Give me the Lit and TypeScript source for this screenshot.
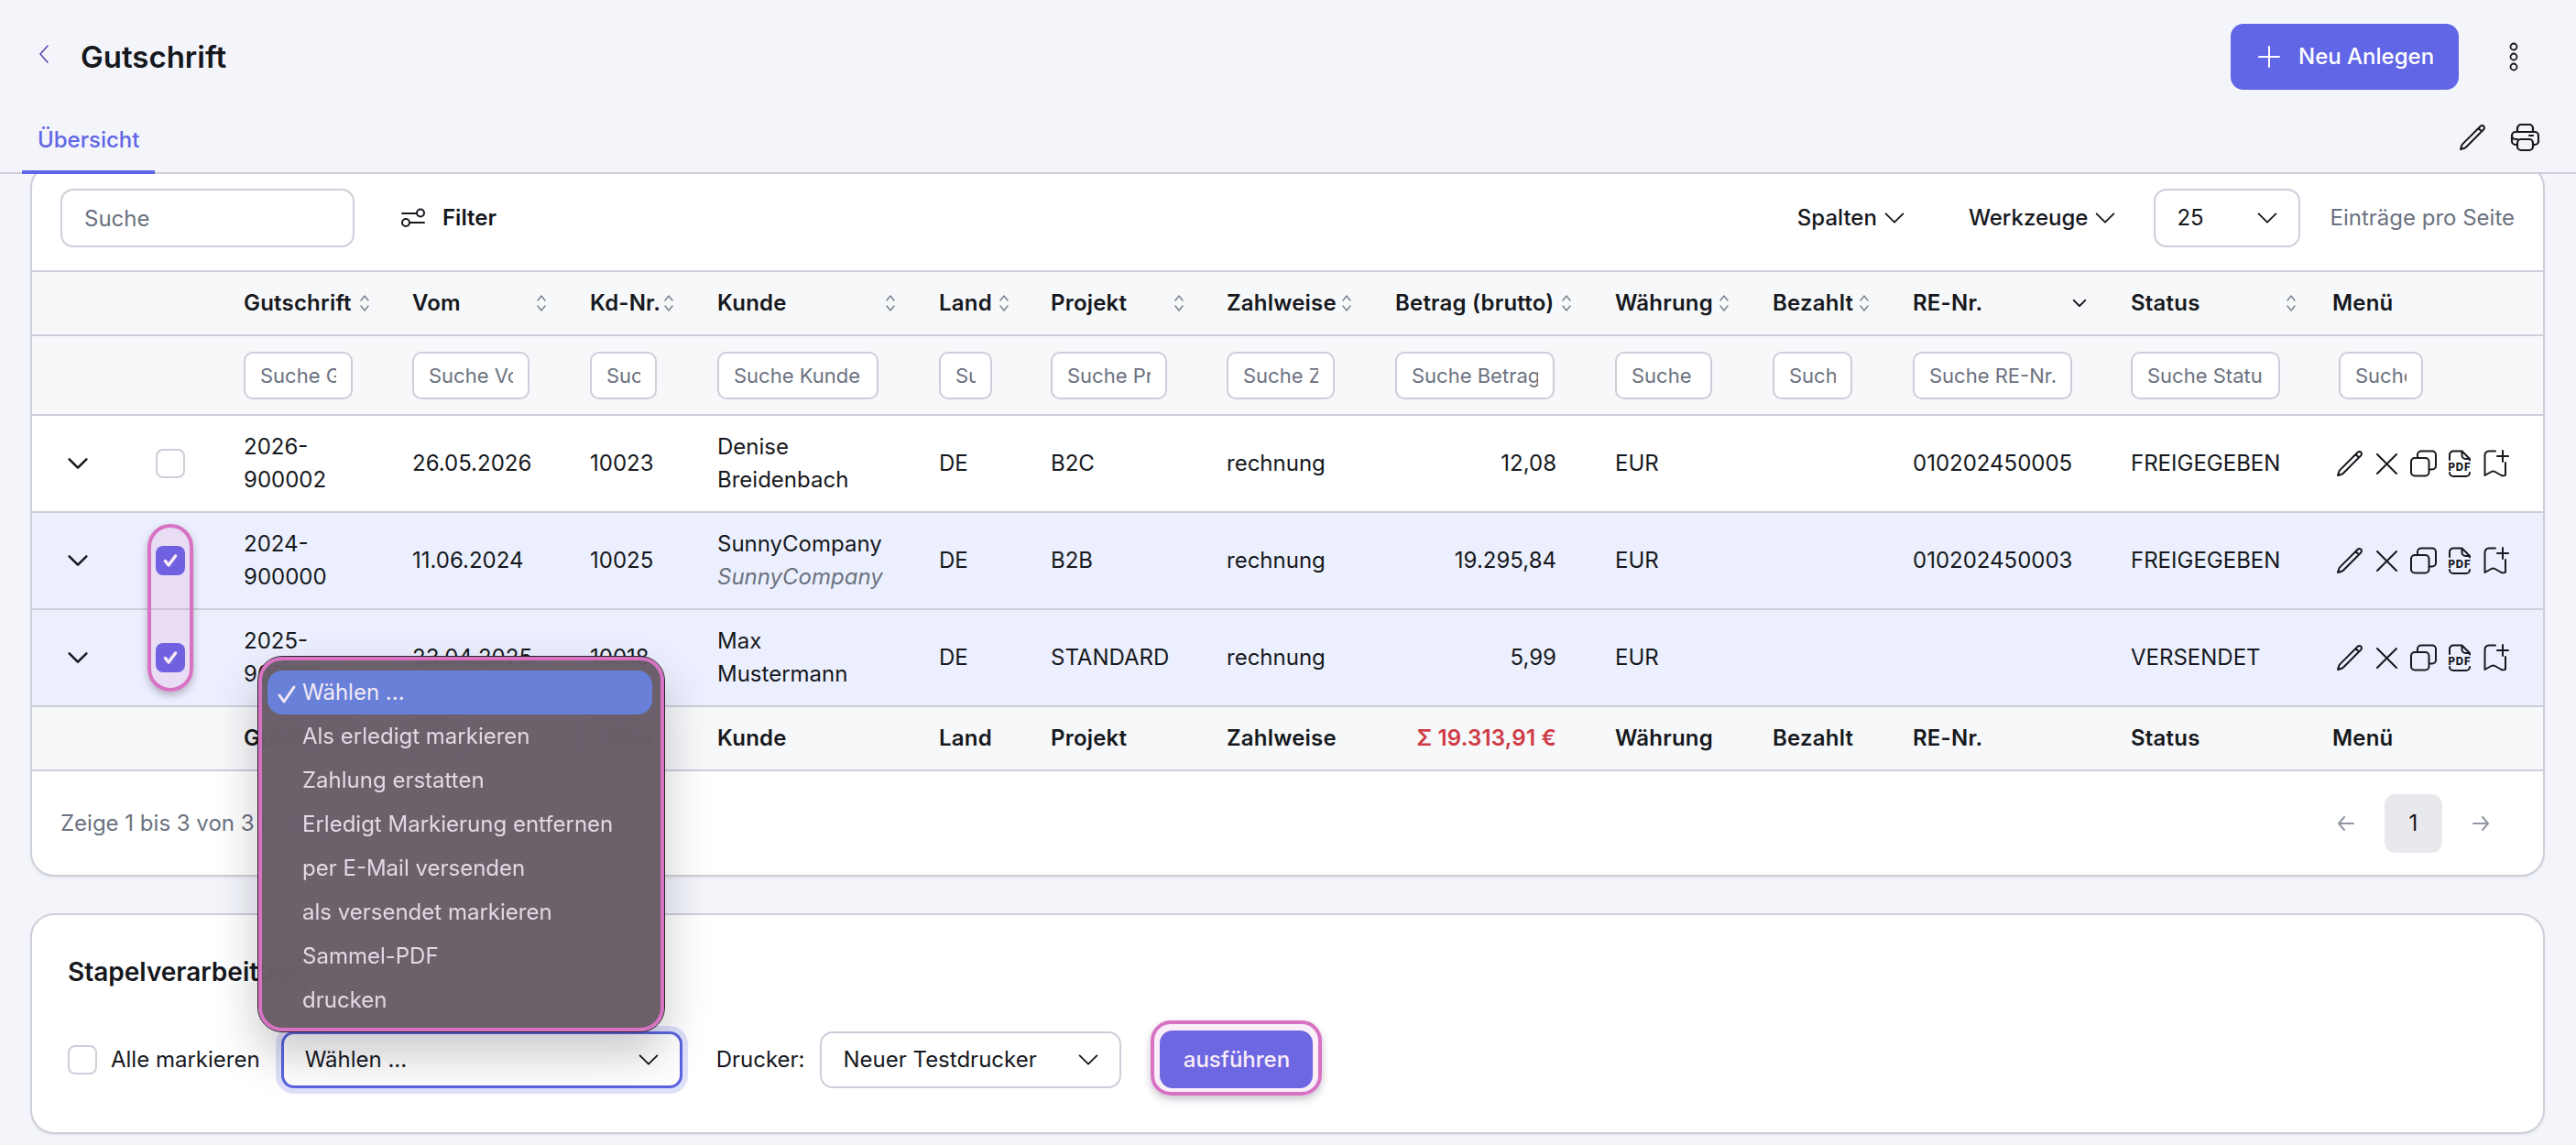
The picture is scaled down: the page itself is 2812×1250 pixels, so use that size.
import { LitElement, html, css, svg } from 'lit';
import { customElement } from 'lit/decorators.js';

type Col = { label: string; x: number; input: number; sort: 'both' | 'down' | 'none'; head: number; inputLeft?: number };

// x is only used to derive column widths from the neighbouring column
const COLS: Col[] = [
  { label: 'Gutschrift', x: 266, input: 119, sort: 'both', head: 139 },
  { label: 'Vom', x: 450, input: 128, sort: 'both', head: 148 },
  { label: 'Kd-Nr.', x: 644, input: 73, sort: 'both', head: 93 },
  { label: 'Kunde', x: 783, input: 176, sort: 'both', head: 196 },
  { label: 'Land', x: 1025, input: 58, sort: 'both', head: 78 },
  { label: 'Projekt', x: 1147, input: 127, sort: 'both', head: 147 },
  { label: 'Zahlweise', x: 1339, input: 118, sort: 'both', head: 138 },
  { label: 'Betrag (brutto)', x: 1523, input: 174, sort: 'both', head: 194 },
  { label: 'Währung', x: 1763, input: 106, sort: 'both', head: 126 },
  { label: 'Bezahlt', x: 1935, input: 87, sort: 'both', head: 107 },
  { label: 'RE-Nr.', x: 2088, input: 174, sort: 'down', head: 192 },
  { label: 'Status', x: 2326, input: 163, sort: 'both', head: 182 },
  { label: 'Menü', x: 2546, input: 92, sort: 'none', head: 90, inputLeft: 7 },
];
const TABLE_END = 2776;

const ROWS = [
  { no: '2026-900002', date: '26.05.2026', kd: '10023', name: ['Denise', 'Breidenbach'], alt: false, land: 'DE', proj: 'B2C', amount: '12,08', re: '010202450005', status: 'FREIGEGEBEN', sel: false },
  { no: '2024-900000', date: '11.06.2024', kd: '10025', name: ['SunnyCompany', 'SunnyCompany'], alt: true, land: 'DE', proj: 'B2B', amount: '19.295,84', re: '010202450003', status: 'FREIGEGEBEN', sel: true },
  { no: '2025-900001', date: '23.04.2025', kd: '10018', name: ['Max', 'Mustermann'], alt: false, land: 'DE', proj: 'STANDARD', amount: '5,99', re: '', status: 'VERSENDET', sel: true },
];

const MENU = ['Wählen ...', 'Als erledigt markieren', 'Zahlung erstatten', 'Erledigt Markierung entfernen', 'per E-Mail versenden', 'als versendet markieren', 'Sammel-PDF', 'drucken'];

const chevron = (cls = 'chev') => html`<svg class=${cls} viewBox="0 0 24 24" fill="none" stroke="currentColor" stroke-width="1.5" stroke-linecap="round" stroke-linejoin="round"><path d="m19.5 8.25-7.5 7.5-7.5-7.5"/></svg>`;
const sortIcon = html`<svg class="sort" viewBox="0 0 14 20" fill="none" stroke="currentColor" stroke-width="1.5" stroke-linecap="round" stroke-linejoin="round"><path d="M3 7l4-5 4 5M3 13l4 5 4-5"/></svg>`;
const checkMark = html`<svg viewBox="0 0 32 32" fill="none" stroke="#fff" stroke-width="3.500" stroke-linecap="round" stroke-linejoin="round"><path d="M10.500 16.500l3.500 4.500 7.500-10"/></svg>`;
const pencil = svg`<path d="m16.862 4.487 1.687-1.688a1.875 1.875 0 1 1 2.652 2.652L6.832 19.82a4.5 4.5 0 0 1-1.897 1.13l-2.685.8.8-2.685a4.5 4.5 0 0 1 1.13-1.897L16.863 4.487Zm0 0L19.5 7.125"/>`;

const rowIcons = html`
  <div class="icons">
    <svg viewBox="0 0 24 24" fill="none" stroke="currentColor" stroke-width="1.5" stroke-linecap="round" stroke-linejoin="round">${pencil}</svg>
    <svg viewBox="0 0 32 32" fill="none" stroke="currentColor" stroke-width="2" stroke-linecap="round"><path d="M6 6l21 21M27 6L6 27"/></svg>
    <svg viewBox="0 0 32 32" fill="none" stroke="currentColor" stroke-width="2" stroke-linecap="round"><rect x="3" y="10" width="19.5" height="19.5" rx="4"/><path d="M10 9V6.500a4 4 0 0 1 4-4h12a4 4 0 0 1 4 4v12a4 4 0 0 1-4 4h-3"/></svg>
    <svg viewBox="0 0 32 32" fill="none" stroke="currentColor" stroke-width="2" stroke-linecap="round" stroke-linejoin="round"><path d="M5 12V6.500a4 4 0 0 1 4-4h9.500l8.500 8.500v1.500M18.500 3v4a4 4 0 0 0 4 4H27M5 26a4 4 0 0 0 4 4h14a4 4 0 0 0 4-4"/><text x="16" y="23.500" text-anchor="middle" fill="currentColor" stroke="none" font-family="Inter, sans-serif" font-size="11.500" font-weight="800" letter-spacing=".8">PDF</text></svg>
    <svg viewBox="0 0 32 32" fill="none" stroke="currentColor" stroke-width="2" stroke-linecap="round" stroke-linejoin="round"><path d="M15 2.500H8a4.500 4.500 0 0 0-4.500 4.500v22l7-4a4 4 0 0 1 4 0l7 4c1 .5 3.500.500 4.500-.5V15"/><path d="M23 2v12M17 8h12"/></svg>
  </div>`;

@customElement('app-root')
export class AppRoot extends LitElement {
  static styles = css`
    :host {
      display: block;
      position: relative;
      width: 2812px;
      height: 1250px;
      overflow: hidden;
      background: #f3f5fb;
      color: #16181d;
      font: 400 24px/36px Inter, 'Liberation Sans', sans-serif;
    }
    * { box-sizing: border-box; }
    svg { display: block; flex: none; }
    input { font: inherit; color: inherit; }
    input::placeholder { color: #6b7280; opacity: 1; }

    .head {
      position: relative;
      z-index: 1;
      height: 190px;
      padding-top: 26px;
      background: #f3f5fb;
      border-bottom: 2px solid #cdced9;
      display: flex;
      flex-direction: column;
    }
    .top { display: flex; align-items: center; height: 72px; padding: 0 54px 0 36px; }
    .back { width: 24px; height: 24px; color: #5b3fb0; margin-top: -6px; }
    .title { font-size: 33px; font-weight: 600; margin-left: 28px; }
    .new {
      margin-left: auto;
      width: 249px;
      height: 72px;
      display: flex;
      align-items: center;
      gap: 18px;
      padding-left: 28px;
      border-radius: 14px;
      background: #6066e6;
      color: #fff;
      font-weight: 500;
    }
    .new svg { width: 28px; height: 28px; }
    .dots { width: 28px; height: 32px; margin-left: 46px; }
    .tabs { flex: 1; display: flex; align-items: center; padding: 0 40px 0 24px; margin-top: 22px; }
    .tab {
      align-self: stretch;
      display: flex;
      align-items: center;
      padding: 0 17px;
      margin-bottom: -2px;
      border-bottom: 4px solid #6066e6;
      color: #6066e6;
      font-weight: 500;
    }
    .tabs .tools { margin-left: auto; display: flex; gap: 25px; margin-top: -8px; }
    .tools svg { width: 32px; height: 32px; }

    .card {
      margin: 0 34px 0 33px;
      background: #fff;
      border: 2px solid #cdced9;
      border-radius: 26px;
      box-shadow: 0 2px 3px rgba(30, 30, 60, 0.05);
    }
    .list { margin-top: -11px; overflow: hidden; }
    .toolbar { display: flex; align-items: center; height: 114px; padding: 0 31px; }
    .search, .select {
      height: 64px;
      border: 2px solid #cdced9;
      border-radius: 14px;
      background: #fff;
      display: flex;
      align-items: center;
    }
    .search { width: 321px; padding: 0 24px; outline: none; }
    .filter { display: flex; align-items: center; gap: 18px; margin-left: 50px; font-weight: 600; }
    .filter svg { width: 28px; height: 22px; }
    .menu-btn { display: flex; align-items: center; gap: 4px; font-weight: 500; }
    .chev { width: 30px; height: 30px; }
    .spalten { margin-left: auto; }
    .werkzeuge { margin-left: 66px; }
    .select { justify-content: space-between; padding: 0 19px 0 23px; }
    .size { width: 160px; margin-left: 38px; }
    .hint { margin-left: 32px; color: #6b7280; }

    table { width: 100%; border-collapse: separate; border-spacing: 0; table-layout: fixed; }
    th, td { padding: 0; border-bottom: 2px solid #cdced9; white-space: nowrap; font-weight: 400; text-align: left; }
    thead tr:first-child th { border-top: 2px solid #cdced9; height: 72px; background: #f7f8fa; font-weight: 600; letter-spacing: 0.2px; }
    .filters td { height: 87px; background: #f7f8fa; }
    .filters input {
      display: block;
      height: 52px;
      padding: 0 16px;
      font-size: 22px;
      border: 2px solid #cdced9;
      border-radius: 10px;
      background: #fff;
      outline: none;
    }
    .hcell { display: flex; align-items: center; justify-content: space-between; }
    .sort { width: 14px; height: 20px; color: #7b8290; }
    .down { width: 20px; height: 20px; stroke-width: 2.5; }
    tbody td { height: 106px; }
    tr.sel td { background: #ecf0fe; }
    td.wrap { white-space: normal; padding-right: 40px; }
    td.no { padding-right: 50px; }
    td.right, tfoot .right { text-align: right; padding-right: 64px; }
    .sub { color: #6b7280; font-style: italic; }
    .expand { width: 30px; height: 30px; margin-left: 35px; stroke-width: 2; }
    .box {
      width: 32px;
      height: 32px;
      border: 2px solid #cdced9;
      border-radius: 8px;
      background: #fff;
    }
    td .box { margin-left: 35px; }
    .box.on { background: #5f5fe6; border: 0; }
    tfoot td { height: 70px; background: #f7f8fa; font-weight: 600; letter-spacing: 0.2px; }
    tfoot .sum { color: #d03a45; }
    .icons { display: flex; gap: 8px; margin-left: 3px; }
    .icons svg { width: 32px; height: 32px; }

    .pager { display: flex; align-items: center; justify-content: space-between; height: 113px; padding: 0 57px 0 31px; color: #6b7280; }
    .pages { display: flex; align-items: center; gap: 31px; }
    .pages svg { width: 22px; height: 22px; color: #9297a3; }
    .page { width: 63px; height: 64px; border-radius: 12px; background: #e8e9ed; color: #16181d; display: flex; align-items: center; justify-content: center; }

    .batch { margin-top: 40px; height: 241px; padding: 44px 39px 0; }
    .batch h2 { margin: 0; font-size: 28px; line-height: 36px; font-weight: 600; }
    .actions { display: flex; align-items: center; margin-top: 46px; }
    .actions .label { margin-left: 15px; }
    .select.bulk {
      width: 438px;
      height: 62px;
      margin-left: 23px;
      border: 3px solid #5b63e0;
      box-shadow: 0 0 0 6px #dfe1fb;
    }
    .printer-label { margin-left: 37px; }
    .select.printer { width: 329px; height: 62px; margin-left: 17px; }
    .run-wrap { position: relative; margin-left: 42px; }
    .run {
      width: 167px;
      height: 63px;
      border-radius: 14px;
      background: #6066e6;
      color: #fff;
      font-weight: 500;
      display: flex;
      align-items: center;
      justify-content: center;
    }

    /* annotation marks lying over the page */
    .mark {
      position: absolute;
      z-index: 2;
      border: 4px solid #d873c4;
      background: rgba(216, 115, 196, 0.15);
      box-shadow: 0 4px 8px rgba(40, 20, 50, 0.3);
    }
    .capsule { left: 161px; top: 572px; width: 50px; height: 183px; border-radius: 26px; }
    .run-wrap::after {
      content: '';
      position: absolute;
      inset: -11px -10px -8px -10px;
      border: 4px solid #d873c4;
      border-radius: 22px;
      background: rgba(216, 115, 196, 0.12);
      box-shadow: 0 4px 8px rgba(40, 20, 50, 0.25);
    }

    .popup {
      position: absolute;
      z-index: 3;
      left: 282px;
      top: 717px;
      width: 443px;
      height: 409px;
      padding: 11px 9px 11px 6px;
      border: 4px solid #d873c4;
      border-radius: 26px;
      background: rgba(99, 87, 98, 0.94);
      backdrop-filter: blur(18px);
      outline: 1px solid #2a252b;
      box-shadow: 0 24px 50px rgba(20, 20, 30, 0.24);
      color: #e5d8e4;
      font-size: 24px;
    }
    .opt { height: 48px; padding-left: 38px; display: flex; align-items: center; position: relative; }
    .opt.active { border-radius: 16px; background: #6880d8; color: #f4e9f4; }
    .opt svg { position: absolute; left: 10px; top: 15px; width: 22px; height: 22px; }
  `;

  render() {
    return html`
      <header class="head">
        <div class="top">
          <svg class="back" viewBox="0 0 24 24" fill="none" stroke="currentColor" stroke-width="1.5" stroke-linecap="round" stroke-linejoin="round"><path d="M16 3l-8 9 8 9"/></svg>
          <div class="title">Gutschrift</div>
          <div class="new">
            <svg viewBox="0 0 28 28" fill="none" stroke="currentColor" stroke-width="2" stroke-linecap="round"><path d="M14 3v22M3 14h22"/></svg>
            Neu Anlegen
          </div>
          <svg class="dots" viewBox="0 0 28 32" fill="none" stroke="currentColor" stroke-width="1.8"><circle cx="14" cy="5" r="3.500"/><circle cx="14" cy="16" r="3.500"/><circle cx="14" cy="27" r="3.500"/></svg>
        </div>
        <div class="tabs">
          <div class="tab">Übersicht</div>
          <div class="tools">
            <svg viewBox="0 0 24 24" fill="none" stroke="currentColor" stroke-width="1.5" stroke-linecap="round" stroke-linejoin="round">${pencil}</svg>
            <svg viewBox="0 0 32 32" fill="none" stroke="currentColor" stroke-width="2.200" stroke-linecap="round" stroke-linejoin="round"><path d="M8 18a3 3 0 0 0-.5 0H6a4 4 0 0 1-4-4v0a4 4 0 0 1 4-4h21a4 4 0 0 1 4 4v6a4 4 0 0 1-4 4h-2M8 24H6a4 4 0 0 1-4-4v-6"/><path d="M8 10V6a4 4 0 0 1 4-4h9a4 4 0 0 1 4 4v4"/><rect x="8" y="18" width="17" height="12" rx="4"/><path d="M21 14h4"/></svg>
          </div>
        </div>
      </header>

      <section class="card list">
        <div class="toolbar">
          <input class="search" placeholder="Suche" />
          <div class="filter">
            <svg viewBox="0 0 28 22" fill="none" stroke="currentColor" stroke-width="2" stroke-linecap="round"><path d="M2 6h15M11 16h15"/><circle cx="22" cy="5.500" r="4"/><circle cx="6" cy="16" r="4"/></svg>
            Filter
          </div>
          <div class="menu-btn spalten">Spalten ${chevron()}</div>
          <div class="menu-btn werkzeuge">Werkzeuge ${chevron()}</div>
          <div class="select size">25 ${chevron()}</div>
          <div class="hint">Einträge pro Seite</div>
        </div>
        ${this.renderTable()}
        <div class="pager">
          <div>Zeige 1 bis 3 von 3 Einträgen</div>
          <div class="pages">
            <svg viewBox="0 0 22 22" fill="none" stroke="currentColor" stroke-width="2" stroke-linecap="round" stroke-linejoin="round"><path d="M9 4l-6 7 6 7M3 11h16"/></svg>
            <div class="page">1</div>
            <svg viewBox="0 0 22 22" fill="none" stroke="currentColor" stroke-width="2" stroke-linecap="round" stroke-linejoin="round"><path d="M13 4l6 7-6 7M19 11H3"/></svg>
          </div>
        </div>
      </section>

      <section class="card batch">
        <h2>Stapelverarbeitung</h2>
        <div class="actions">
          <div class="box"></div>
          <div class="label">Alle markieren</div>
          <div class="select bulk">Wählen ... ${chevron()}</div>
          <div class="printer-label">Drucker:</div>
          <div class="select printer">Neuer Testdrucker ${chevron()}</div>
          <div class="run-wrap"><div class="run">ausführen</div></div>
        </div>
      </section>

      <div class="mark capsule"></div>
      <div class="popup">
        ${MENU.map(
          (m, i) => html`<div class="opt ${i === 0 ? 'active' : ''}">
            ${i === 0 ? html`<svg viewBox="0 0 22 22" fill="none" stroke="currentColor" stroke-width="3" stroke-linecap="round" stroke-linejoin="round"><path d="M3 12l5 7L19 3"/></svg>` : ''}${m}
          </div>`,
        )}
      </div>
    `;
  }

  private renderTable() {
    const widths = COLS.map((c, i) => (COLS[i + 1]?.x ?? TABLE_END) - c.x);
    return html`
      <table>
        <colgroup>
          <col style="width:100px" />
          <col style="width:131px" />
          ${widths.map((w) => html`<col style="width:${w}px" />`)}
        </colgroup>
        <thead>
          <tr>
            <th></th>
            <th></th>
            ${COLS.map(
              (c) => html`<th>
                <div class="hcell" style="width:${c.head}px">
                  <span>${c.label}</span>
                  ${c.sort === 'both' ? sortIcon : c.sort === 'down' ? chevron('down') : ''}
                </div>
              </th>`,
            )}
          </tr>
          <tr class="filters">
            <td></td>
            <td></td>
            ${COLS.map(
              (c) => html`<td>
                <input placeholder="Suche ${c.label}" style="width:${c.input}px;margin-left:${c.inputLeft ?? 0}px" />
              </td>`,
            )}
          </tr>
        </thead>
        <tbody>
          ${ROWS.map(
            (r) => html`<tr class=${r.sel ? 'sel' : ''}>
              <td>${chevron('expand')}</td>
              <td><div class="box ${r.sel ? 'on' : ''}">${r.sel ? checkMark : ''}</div></td>
              <td class="wrap no">${r.no}</td>
              <td>${r.date}</td>
              <td>${r.kd}</td>
              <td>${r.name[0]}<br /><span class=${r.alt ? 'sub' : ''}>${r.name[1]}</span></td>
              <td>${r.land}</td>
              <td>${r.proj}</td>
              <td>rechnung</td>
              <td class="right">${r.amount}</td>
              <td>EUR</td>
              <td></td>
              <td>${r.re}</td>
              <td>${r.status}</td>
              <td>${rowIcons}</td>
            </tr>`,
          )}
        </tbody>
        <tfoot>
          <tr>
            <td></td>
            <td></td>
            ${COLS.map((c) =>
              c.label.startsWith('Betrag')
                ? html`<td class="right sum">Σ 19.313,91 €</td>`
                : html`<td>${c.label}</td>`,
            )}
          </tr>
        </tfoot>
      </table>
    `;
  }
}
